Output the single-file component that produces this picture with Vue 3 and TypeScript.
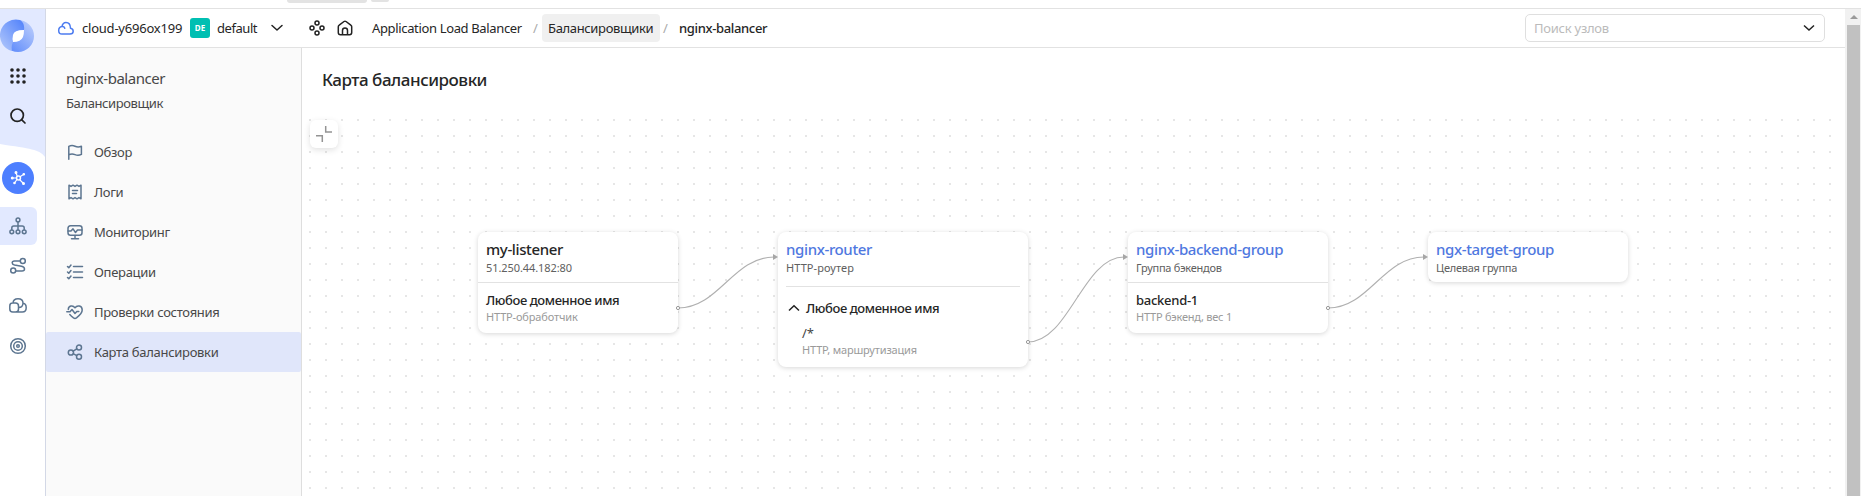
<script setup lang="ts">
interface MenuItem { label: string; icon: string[]; active?: boolean }
interface MapNode {
  id: string
  x: number
  width: number
  height: number
  title: string
  subtitle: string
  link?: boolean
  row?: { title: string; subtitle: string }
  route?: { host: string; path: string; kind: string }
}

const menu: MenuItem[] = [
  { label: 'Обзор', icon: ['M1.8 15.2V2.4Q4.8.8 8 2.2T14.4 2.2V10.4Q11.200 12 8 10.600T1.800 10.800'] },
  { label: 'Логи', icon: ['M2 1.200L4 2.400 6 1.200 8 2.400 10 1.200 12 2.400 14 1.200V14.800L12 13.600 10 14.800 8 13.600 6 14.800 4 13.600 2 14.800Z', 'M5.500 6.500H10.500M5.500 9.500H9.500'] },
  { label: 'Мониторинг', icon: ['M3.500 1.800H12.500Q15 1.800 15 4.300V8.800Q15 11.300 12.500 11.300H3.500Q1 11.300 1 8.800V4.300Q1 1.800 3.500 1.800Z', 'M1 7H4L6 4.800 8.500 8.500 10.500 6H15', 'M8 11.500V14.500M4.500 14.800H11.500'] },
  { label: 'Операции', icon: ['M6.500 2.500H15.500M6.500 8H15.500M6.500 13.500H15.500', 'M.5 2.500L1.800 3.800 4 1M.5 8L1.800 9.300 4 6.500M.5 13.500L1.800 14.800 4 12'] },
  { label: 'Проверки состояния', icon: ['M1.300 5.500C1.300 1.500 6 .8 8 3.800C10 .8 15.200 1.500 15.200 6C15.200 9.500 11.500 12.300 9.500 13.900Q8 15 6.500 13.900Q4.300 12.200 2.800 10.500', 'M-.2 7.700H3L5 5.500 8 9.500 9.800 7.500H11.800'] },
  { label: 'Карта балансировки', active: true, icon: ['M6.500 8.500A2.600 2.600 0 1 1 1.300 8.500A2.600 2.600 0 1 1 6.500 8.500Z', 'M14.500 3.500A2.500 2.500 0 1 1 9.500 3.500A2.500 2.500 0 1 1 14.500 3.500Z', 'M14.500 12.700A2.500 2.500 0 1 1 9.500 12.700A2.500 2.500 0 1 1 14.500 12.700Z', 'M6.200 7.200L9.700 4.800M6.200 9.700L9.700 11.600'] },
]

const nodes: MapNode[] = [
  { id: 'listener', x: 176, width: 200, height: 101, title: 'my-listener', subtitle: '51.250.44.182:80', row: { title: 'Любое доменное имя', subtitle: 'HTTP-обработчик' } },
  { id: 'router', x: 476, width: 250, height: 135, title: 'nginx-router', subtitle: 'HTTP-роутер', link: true, route: { host: 'Любое доменное имя', path: '/*', kind: 'HTTP, маршрутизация' } },
  { id: 'backends', x: 826, width: 200, height: 101, title: 'nginx-backend-group', subtitle: 'Группа бэкендов', link: true, row: { title: 'backend-1', subtitle: 'HTTP бэкенд, вес 1' } },
  { id: 'targets', x: 1126, width: 200, height: 50, title: 'ngx-target-group', subtitle: 'Целевая группа', link: true },
]

const edges = [
  { x: 376, y: 196 },
  { x: 726, y: 230 },
  { x: 1026, y: 196 },
]
const endY = 145
const edgePath = (x: number, y: number) => `M${x} ${y}C${x + 41} ${y} ${x + 55} ${endY} ${x + 96} ${endY}`
</script>

<template>
  <div class="app">
    <div class="strip"><i class="pill"></i><i class="pill small"></i></div>
    <div class="shell">
      <nav class="rail">
        <svg width="45" height="487" viewBox="0 9 45 487">
          <defs>
            <linearGradient id="ga" x1="1" y1="0" x2="0" y2="1"><stop offset="0" stop-color="#4f80fb" /><stop offset="1" stop-color="#b5cafb" /></linearGradient>
            <linearGradient id="gb" x1="0" y1="0" x2=".6" y2="1"><stop offset="0" stop-color="#86a8fb" /><stop offset=".55" stop-color="#aac2fb" /><stop offset="1" stop-color="#4f80fb" /></linearGradient>
            <linearGradient id="gc" x1="0" y1="1" x2="1" y2="0"><stop offset="0" stop-color="#4f80fb" /><stop offset="1" stop-color="#c3d3fc" /></linearGradient>
          </defs>
          <path d="M0 9H45V157C39 149 31 149 0 144Z" fill="#e2e9ff" />
          <circle cx="18" cy="36" r="16" fill="url(#gc)" />
          <path d="M20 20A16 16 0 0 0 12 51Q11 46 13 42Q12 39 13 35Q14 30 24 30Q25 23 20 20Z" fill="url(#ga)" />
          <path d="M24 30Q14 30 13 35Q12 39 13 42Q21 42 23 37Q24 34 24 30Z" fill="#fff" />
          <g fill="#222">
            <template v-for="r in 3" :key="r"><circle v-for="c in 3" :key="c" :cx="6 + c * 6" :cy="64 + r * 6" r="1.800" /></template>
          </g>
          <g fill="none" stroke="#222" stroke-width="1.700" stroke-linecap="round"><circle cx="17.200" cy="115.200" r="6.200" /><path d="M21.800 119.800L25 123" /></g>
          <circle cx="18" cy="178" r="16" fill="#4d7fff" />
          <g stroke="#fff" stroke-width="1.200" fill="#fff">
            <path d="M18 178L12 178M18 178L16 173M18 178L23.500 174.500M18 178L14.500 183M18 178L23 183" />
            <circle cx="18.500" cy="178" r="2.100" /><circle cx="12.300" cy="178" r=".9" /><circle cx="16" cy="172.500" r=".9" /><circle cx="23.800" cy="174.300" r=".7" /><circle cx="14.500" cy="183" r=".7" /><circle cx="23.500" cy="183.500" r=".9" />
          </g>
          <circle cx="18.500" cy="178" r="1.200" fill="#4d7fff" />
          <rect x="-6" y="207" width="43" height="38" rx="6" fill="#e2e9ff" />
          <g fill="none" stroke="#5c7590" stroke-width="1.500" stroke-linecap="round" stroke-linejoin="round">
            <circle cx="18" cy="220" r="1.900" /><circle cx="11.800" cy="231.800" r="1.900" /><circle cx="18" cy="231.800" r="1.900" /><circle cx="24.200" cy="231.800" r="1.900" />
            <path d="M18 222V229.500M11.800 229.500V228Q11.800 226 13.800 226H22.200Q24.200 226 24.200 228V229.500" />
            <circle cx="22.800" cy="261" r="2.500" /><circle cx="13.200" cy="270.500" r="2.500" />
            <path d="M20 261H14.500Q12.200 261 12.200 262.800Q12.200 264.500 14.500 265L21.500 266.300Q24.500 267 24.500 269Q24.500 271 22 271H16" />
            <path d="M12.500 303H15.500Q18.500 303 18.500 306V309Q18.500 312 15.500 312H12.700Q9.800 312 9.800 309V306Q9.800 303 12.500 303M15.500 312H22.300Q26.200 312 26.200 307.700Q26.200 303.500 23 303.200Q23 298.800 18 298.800Q13.300 298.800 13 303M23 303.200Q22.800 307.300 18.700 307.600" />
            <circle cx="18" cy="346" r="7.300" /><circle cx="18" cy="346" r="4.300" /><circle cx="18" cy="346" r="1.300" />
          </g>
        </svg>
      </nav>
      <div class="page">
        <header class="header">
          <svg class="cloud" width="18" height="16" viewBox="0 0 18 16"><path d="M5 14H13Q16.200 14 16.200 11.200Q16.200 8.700 13.500 8.200Q13.300 2.500 9 2.500Q5.800 2.500 5 6.500Q1.700 7 1.700 10.400Q1.700 14 5 14ZM5 6.500Q7.200 6.300 7.800 8.200" /></svg>
          <span class="cloud-name">cloud-y696ox199</span>
          <span class="badge">DE</span>
          <span class="folder">default</span>
          <svg class="chev" width="14" height="8" viewBox="0 0 14 8"><path d="M2 1.500L7 6L12 1.500" /></svg>
          <svg class="four" width="16" height="16" viewBox="0 0 16 16"><circle cx="8" cy="3" r="2" /><circle cx="3" cy="8" r="2" /><circle cx="13" cy="8" r="2" /><circle cx="8" cy="13" r="2" /></svg>
          <svg class="home" width="16" height="16" viewBox="0 0 16 16"><path d="M1.300 6.800Q1.300 5.800 2.200 5.200L7 1.500Q8 .8 9 1.500L13.800 5.200Q14.700 5.800 14.700 6.800V12.500Q14.700 14.700 12.500 14.700H3.500Q1.300 14.700 1.300 12.500ZM5.500 14.500V10.500Q5.500 8 8 8T10.500 10.500V14.500" /></svg>
          <span class="crumb">Application Load Balancer</span>
          <span class="slash">/</span>
          <span class="crumb-box">Балансировщики</span>
          <span class="slash second">/</span>
          <span class="current">nginx-balancer</span>
          <div class="search"><span>Поиск узлов</span><svg width="14" height="8" viewBox="0 0 14 8"><path d="M2 1.500L7 6L12 1.500" /></svg></div>
        </header>
        <div class="body">
          <aside class="sidebar">
            <div class="res-name">nginx-balancer</div>
            <div class="res-kind">Балансировщик</div>
            <div v-for="m in menu" :key="m.label" class="item" :class="{ active: m.active }">
              <svg width="16" height="16" viewBox="0 0 16 16"><path v-for="d in m.icon" :key="d" :d="d" /></svg>
              <span>{{ m.label }}</span>
            </div>
          </aside>
          <main class="main">
            <h1>Карта балансировки</h1>
            <div class="map">
              <svg class="layer" width="1543" height="384">
                <defs><pattern id="dots" x="7" y="7" width="16" height="16" patternUnits="userSpaceOnUse"><rect width="2" height="2" fill="#e6e6e6" /></pattern></defs>
                <rect x="7" y="7" width="1522" height="377" fill="url(#dots)" />
              </svg>
              <button class="fit"><svg width="16" height="16" viewBox="0 0 16 16"><path d="M9.700 0V6H16M0 9.700H6.300V16" /></svg></button>
              <section v-for="n in nodes" :key="n.id" class="node" :class="n.id" :style="{ left: n.x + 'px', width: n.width + 'px', height: n.height + 'px' }">
                <div class="head"><div class="title" :class="{ link: n.link }">{{ n.title }}</div><div class="sub">{{ n.subtitle }}</div></div>
                <div v-if="n.row" class="row"><div class="row-title">{{ n.row.title }}</div><div class="row-sub">{{ n.row.subtitle }}</div></div>
                <div v-if="n.route" class="route">
                  <div class="host"><svg width="12" height="8" viewBox="0 0 12 8"><path d="M1 6.500L6 1.700L11 6.500" /></svg><span>{{ n.route.host }}</span></div>
                  <div class="path">{{ n.route.path }}</div>
                  <div class="row-sub">{{ n.route.kind }}</div>
                </div>
              </section>
              <svg class="layer edges" width="1543" height="384">
                <g v-for="e in edges" :key="e.x">
                  <path :d="edgePath(e.x, e.y)" class="line" />
                  <path :d="`M${e.x + 95} ${endY - 3}L${e.x + 100} ${endY}L${e.x + 95} ${endY + 3}Z`" class="tip" />
                  <circle :cx="e.x" :cy="e.y" r="1.600" class="port" />
                </g>
              </svg>
            </div>
          </main>
        </div>
      </div>
      <div class="scroll"><i class="up"></i><i class="thumb"></i></div>
    </div>
  </div>
</template>

<style>
body { overflow: hidden; background: #fff; }
</style>
<style scoped>
.app { width: 1861px; height: 496px; overflow: hidden; background: #fff; font-family: 'Noto Sans', 'Open Sans', sans-serif; font-size: 13px; color: #262626; }
.app *, .app { box-sizing: border-box; }
.strip { height: 9px; border-bottom: 1px solid #e2e2e2; display: flex; gap: 4px; padding-left: 287px; }
.pill { width: 80px; height: 3px; background: #e3e3e3; border-radius: 0 0 4px 4px; }
.pill.small { width: 18px; height: 2px; }
.shell { display: flex; height: 487px; }
.rail { width: 46px; border-right: 1px solid #d3d8e6; flex: none; }
.rail svg { display: block; }
.page { width: 1799px; flex: none; }
.header { height: 39px; border-bottom: 1px solid #e2e2e2; display: flex; align-items: center; padding-left: 11px; white-space: nowrap; letter-spacing: -.35px; }
.header > * { flex: none; }
.header > svg { fill: none; stroke: #222; stroke-width: 1.500; stroke-linecap: round; stroke-linejoin: round; }
.header > .cloud { stroke: #4d7cf0; }
.cloud-name { width: 101px; margin-left: 7px; letter-spacing: -.22px; }
.badge { width: 20px; height: 20px; margin-left: 7px; border-radius: 3px; background: #00bfb2; color: #fff; font-size: 8px; font-weight: 700; line-height: 20px; text-align: center; letter-spacing: 0; }
.folder { width: 53px; margin-left: 7px; letter-spacing: -.45px; }
.four { margin-left: 25px; }
.home { margin-left: 12px; }
.crumb { width: 161px; margin-left: 19px; }
.slash { width: 9px; color: #aaa; }
.crumb-box { width: 118px; height: 28px; line-height: 28px; background: #f0f0f0; border-radius: 4px; padding-left: 6px; }
.slash.second { margin-left: 3px; width: 16px; }
.current { width: 846px; font-weight: 500; }
.search { width: 300px; height: 28px; border: 1px solid #dfdfdf; border-radius: 5px; display: flex; align-items: center; justify-content: space-between; padding: 0 8px; color: #bbb; letter-spacing: -.25px; }
.search svg { fill: none; stroke: #222; stroke-width: 1.500; }
.body { display: flex; height: 448px; }
.sidebar { width: 256px; background: #fafafa; border-right: 1px solid #dedede; flex: none; color: #484848; letter-spacing: -.3px; }
.res-name { margin-top: 19px; height: 24px; line-height: 22px; padding-left: 20px; font-size: 15px; letter-spacing: -.46px; }
.res-kind { height: 41px; line-height: 24px; padding-left: 20px; letter-spacing: -.4px; }
.item { height: 40px; display: flex; align-items: center; padding-left: 21px; gap: 11px; }
.item svg { fill: none; stroke: #5c7590; stroke-width: 1.500; stroke-linecap: round; stroke-linejoin: round; overflow: visible; }
.item.active { background: #e0e6fa; border-radius: 2px; }
.main { width: 1543px; }
h1 { margin: 0; height: 64px; padding-left: 20px; font-size: 17px; font-weight: 500; line-height: 64px; letter-spacing: -.47px; }
.map { position: relative; height: 384px; overflow: hidden; }
.layer { position: absolute; left: 0; top: 0; }
.fit { position: absolute; left: 8px; top: 8px; width: 28px; height: 28px; padding: 6px; border: 0; border-radius: 6px; background: #fff; box-shadow: 0 2px 6px rgba(0, 0, 0, .12); }
.fit svg { display: block; fill: none; stroke: #949494; stroke-width: 1.500; }
.node { position: absolute; top: 120px; background: #fff; border-radius: 8px; box-shadow: 0 1px 5px rgba(0, 0, 0, .16); white-space: nowrap; }
.head { height: 50px; padding: 7px 8px 0; }
.title { height: 20px; line-height: 20px; font-size: 15px; font-weight: 500; letter-spacing: -.37px; }
.title.link { color: #4f78e0; }
.sub { height: 16px; line-height: 17px; font-size: 11px; color: #606060; letter-spacing: -.08px; }
.router .sub { letter-spacing: .08px; }
.backends .sub, .targets .sub { letter-spacing: -.24px; }
.row { border-top: 1px solid #e2e2e2; padding: 8px 8px 0; }
.row-title { height: 18px; line-height: 18px; font-weight: 500; letter-spacing: -.4px; }
.backends .row-title { letter-spacing: -.27px; }
.row-sub { height: 16px; line-height: 16px; font-size: 11px; color: #9a9a9a; letter-spacing: -.16px; }
.backends .row-sub { letter-spacing: -.23px; }
.route { margin: 4px 8px 0; border-top: 1px solid #e2e2e2; padding-top: 11px; }
.host { display: flex; align-items: center; height: 20px; font-weight: 500; padding-left: 2px; gap: 6px; letter-spacing: -.4px; }
.host svg { fill: none; stroke: #222; stroke-width: 1.500; }
.path { height: 18px; margin: 6px 0 0 16px; line-height: 18px; color: #444; }
.route .row-sub { margin-left: 16px; }
.edges { pointer-events: none; }
.line { fill: none; stroke: #b0b0b0; stroke-width: 1.100; }
.tip { fill: #a6a6a6; }
.port { fill: #fff; stroke: #999; stroke-width: 1; }
.scroll { width: 16px; background: #f1f1f1; padding-left: 2px; }
.up { display: block; width: 0; height: 0; margin: 6px 0 6px 3px; border: 4px solid transparent; border-top: 0; border-bottom: 4px solid #9a9a9a; }
.thumb { display: block; width: 13px; height: 471px; background: #c1c1c1; }
</style>
